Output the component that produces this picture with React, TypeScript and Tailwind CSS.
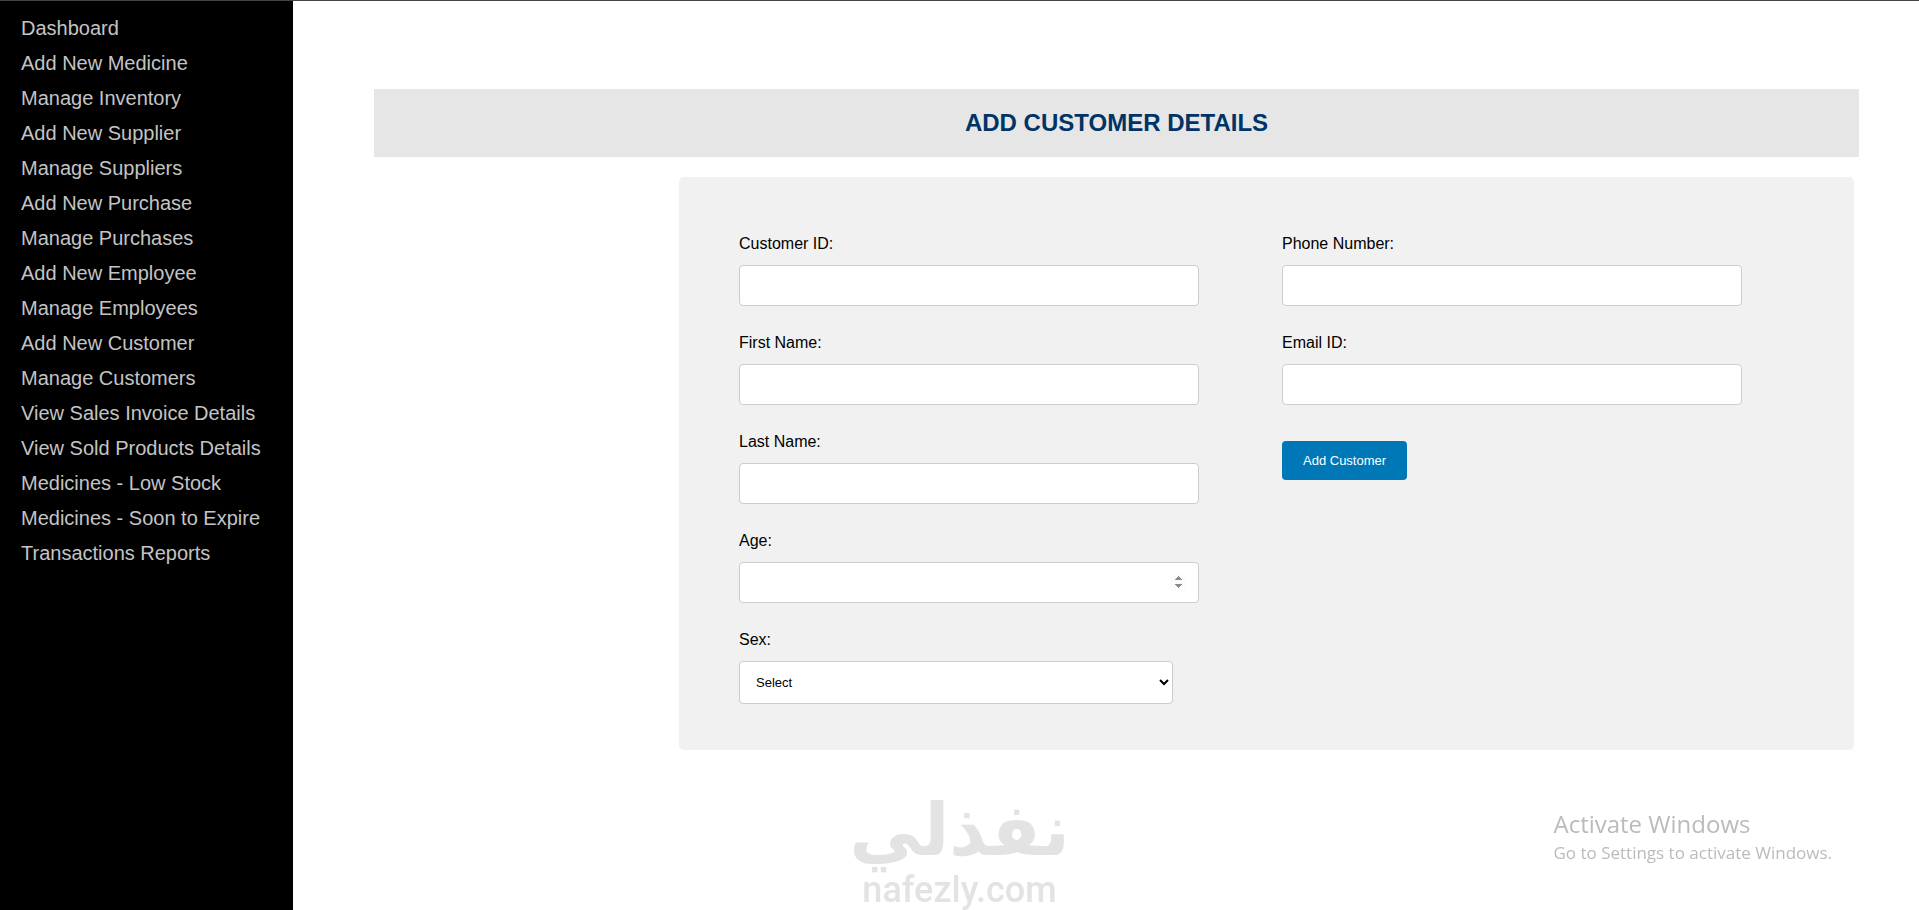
import React from 'react';

const navLinks = [
  'Dashboard',
  'Add New Medicine',
  'Manage Inventory',
  'Add New Supplier',
  'Manage Suppliers',
  'Add New Purchase',
  'Manage Purchases',
  'Add New Employee',
  'Manage Employees',
  'Add New Customer',
  'Manage Customers',
  'View Sales Invoice Details',
  'View Sold Products Details',
  'Medicines - Low Stock',
  'Medicines - Soon to Expire',
  'Transactions Reports',
];

const Sidebar: React.FC = () => (
  <nav className="w-[293px] shrink-0 bg-black pt-[10px]">
    {navLinks.map((label) => (
      <a
        key={label}
        href="#"
        className="block py-[6px] pr-2 pl-[21px] text-[20px] leading-[23px] whitespace-nowrap text-[#c4c4c4] hover:text-white"
      >
        {label}
      </a>
    ))}
  </nav>
);

const Field: React.FC<{ id: string; label: string; children: React.ReactNode }> = ({ id, label, children }) => (
  <div className="mb-7">
    <label htmlFor={id} className="mb-3 block text-[16px] leading-[18px] text-black">
      {label}
    </label>
    {children}
  </div>
);

const TextField: React.FC<{ id: string; label: string; type?: string }> = ({ id, label, type = 'text' }) => (
  <Field id={id} label={label}>
    <input
      id={id}
      name={id}
      type={type}
      className="block h-[41px] w-[calc(80%+26px)] rounded border border-[#ccc] bg-white px-3 text-[13px] [&::-webkit-inner-spin-button]:opacity-100"
    />
  </Field>
);

const CustomerForm: React.FC = () => (
  <form
    onSubmit={(e) => e.preventDefault()}
    className="mt-5 mr-[5px] ml-[305px] grid grid-cols-2 rounded-[5px] bg-[#f1f1f1] pt-[58px] pr-[29px] pb-[18px] pl-[60px]"
  >
    <div>
      <TextField id="cid" label="Customer ID:" />
      <TextField id="cfname" label="First Name:" />
      <TextField id="clname" label="Last Name:" />
      <TextField id="age" label="Age:" type="number" />
      <Field id="sex" label="Sex:">
        <select
          id="sex"
          name="sex"
          className="block h-[43px] w-4/5 rounded border border-[#ccc] bg-white px-3 text-[13px] text-black"
        >
          <option>Select</option>
          <option>Female</option>
          <option>Male</option>
          <option>Others</option>
        </select>
      </Field>
    </div>
    <div>
      <TextField id="phno" label="Phone Number:" type="tel" />
      <TextField id="emid" label="Email ID:" type="email" />
      <button
        type="submit"
        className="mt-2 h-[39px] cursor-pointer rounded bg-[#0077b6] px-[21px] text-[13px] text-white"
      >
        Add Customer
      </button>
    </div>
  </form>
);

const Watermark: React.FC = () => (
  <div className="pointer-events-none fixed bottom-0 left-1/2 flex -translate-x-1/2 flex-col items-center text-[#e3e3e3]">
    <span
      lang="ar"
      dir="rtl"
      className="font-['DejaVu_Sans',sans-serif] text-[72px] leading-[80px] font-bold whitespace-nowrap"
    >
      نفذلي
    </span>
    <span className="font-[Roboto,sans-serif] text-[36px] leading-[40px] font-medium">nafezly.com</span>
  </div>
);

const ActivateNotice: React.FC = () => (
  <div className="pointer-events-none fixed right-[87px] bottom-11 font-['Open_Sans',sans-serif] text-[#bbb]">
    <p className="text-[24px] leading-[32px]">Activate Windows</p>
    <p className="text-[17px] leading-[26px]">Go to Settings to activate Windows.</p>
  </div>
);

function App() {
  return (
    <div className="flex min-h-screen border-t border-[#444] bg-white font-['Liberation_Sans',Arial,sans-serif]">
      <Sidebar />
      <main className="min-w-0 grow pt-[88px] pr-[60px] pl-[81px]">
        <h2 className="bg-[#e6e6e6] py-5 text-center text-[24px] leading-[28px] font-bold text-[#003366]">
          ADD CUSTOMER DETAILS
        </h2>
        <CustomerForm />
      </main>
      <Watermark />
      <ActivateNotice />
    </div>
  );
}

export default App;
